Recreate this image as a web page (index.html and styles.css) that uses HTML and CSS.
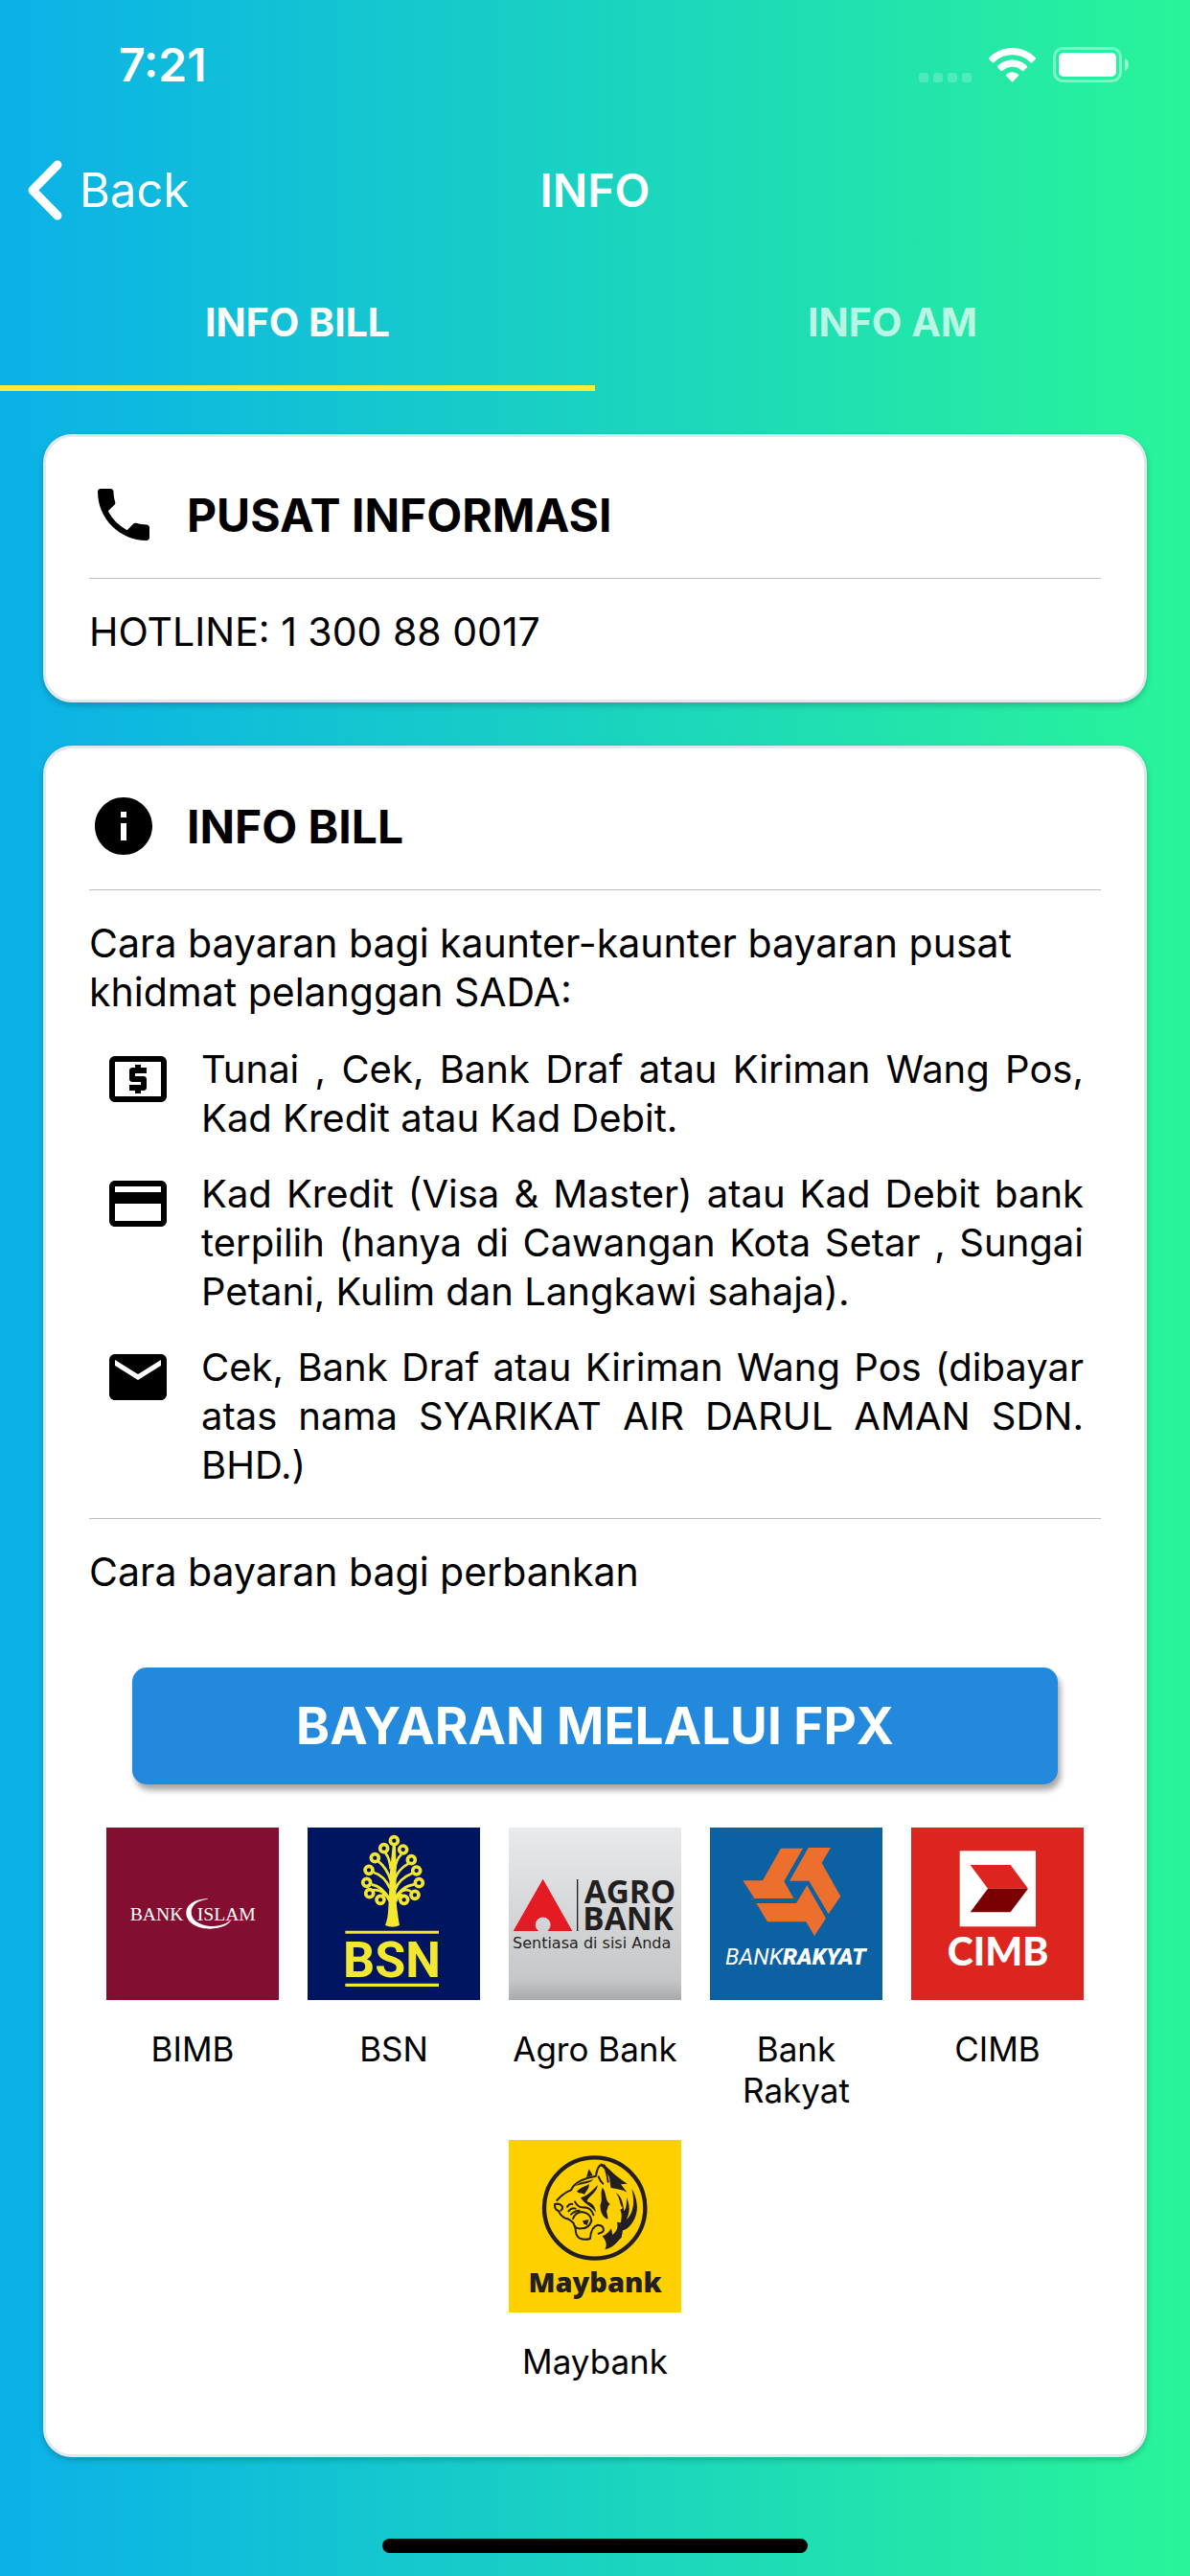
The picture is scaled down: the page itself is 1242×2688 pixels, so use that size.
FILE: index.html
```html
<!DOCTYPE html>
<html lang="ms">
<head>
    <meta charset="UTF-8">
    <meta name="viewport" content="width=device-width, initial-scale=1.0">
    <title>Info</title>
    <link rel="stylesheet" href="styles.css">
</head>
<body>
    <div class="status-bar">
        <span class="time">7:21</span>
        <div class="status-icons">
            <svg class="signal" viewBox="0 0 55 36">
                <g fill="#fff" opacity="0.2">
                    <rect x="0" y="26" width="10" height="10" rx="3"/>
                    <rect x="15" y="26" width="10" height="10" rx="3"/>
                    <rect x="30" y="26" width="10" height="10" rx="3"/>
                    <rect x="45" y="26" width="10" height="10" rx="3"/>
                </g>
            </svg>
            <svg class="wifi" viewBox="0 0 49 36">
                <g fill="#fff">
                    <path d="M24.500 0C15 0 6.500 3.800.5 10.100c-.5.5-.5 1.300 0 1.800l3.200 3.300c.5.5 1.300.5 1.800 0C10.400 10.200 17.100 7.300 24.500 7.300s14.100 2.900 19 7.900c.5.5 1.300.5 1.800 0l3.200-3.300c.5-.5.5-1.300 0-1.800C42.500 3.800 34 0 24.500 0z"/>
                    <path d="M24.500 12.600c-6 0-11.400 2.400-15.200 6.200-.5.5-.5 1.200 0 1.700l3.200 3.300c.5.5 1.300.5 1.800 0 2.600-2.500 6.200-4.100 10.200-4.100s7.600 1.600 10.200 4.100c.5.5 1.300.5 1.800 0l3.200-3.300c.5-.5.5-1.200 0-1.700-3.800-3.800-9.200-6.200-15.200-6.200z"/>
                    <path d="M24.500 25.200c-2.500 0-4.700.9-6.300 2.400-.5.500-.5 1.200 0 1.700l5.400 5.800c.5.500 1.300.5 1.800 0l5.400-5.800c.5-.5.5-1.200 0-1.700-1.600-1.500-3.800-2.400-6.300-2.400z"/>
                </g>
            </svg>
            <svg class="battery" viewBox="0 0 80 38">
                <rect x="1.500" y="1.500" width="69" height="34" rx="9" fill="none" stroke="#fff" stroke-width="3" opacity="0.4"/>
                <rect x="6" y="6" width="60" height="25" rx="5" fill="#fff"/>
                <path d="M75 12c2.500 1 4 3.600 4 6.500s-1.500 5.500-4 6.500z" fill="#fff" opacity="0.5"/>
            </svg>
        </div>
    </div>

    <header class="header">
        <button type="button" class="back">
            <svg viewBox="0 0 36 63"><path d="M31 5L5 31.500L31 58" fill="none" stroke="#fff" stroke-width="9" stroke-linecap="round" stroke-linejoin="round"/></svg>
            Back
        </button>
        <h1>INFO</h1>
    </header>

    <nav class="tabs">
        <button type="button" class="tab active">INFO BILL</button>
        <button type="button" class="tab">INFO AM</button>
    </nav>

    <main class="content">
        <section class="card">
            <div class="card-title">
                <svg class="icon" viewBox="0 0 24 24"><path d="M6.620 10.790c1.440 2.830 3.760 5.140 6.590 6.590l2.200-2.200c.27-.27.67-.36 1.020-.24 1.120.37 2.330.57 3.570.57.55 0 1 .45 1 1V20c0 .55-.45 1-1 1-9.390 0-17-7.610-17-17 0-.55.450-1 1-1h3.500c.55 0 1 .45 1 1 0 1.250.2 2.450.57 3.570.11.35.03.74-.25 1.020l-2.200 2.200z"/></svg>
                <h2>PUSAT INFORMASI</h2>
            </div>
            <hr>
            <p>HOTLINE: 1 300 88 0017</p>
        </section>

        <section class="card">
            <div class="card-title">
                <svg class="icon" viewBox="0 0 24 24"><path d="M12 2C6.480 2 2 6.480 2 12s4.480 10 10 10 10-4.480 10-10S17.520 2 12 2zm1 15h-2v-6h2v6zm0-8h-2V7h2v2z"/></svg>
                <h2>INFO BILL</h2>
            </div>
            <hr>
            <p>Cara bayaran bagi kaunter-kaunter bayaran pusat khidmat pelanggan SADA:</p>
            <ul class="methods">
                <li>
                    <svg class="icon" viewBox="0 0 24 24"><path d="M11 17h2v-1h1c.55 0 1-.45 1-1v-3c0-.55-.45-1-1-1h-3v-1h4V8h-2V7h-2v1h-1c-.55 0-1 .45-1 1v3c0 .55.450 1 1 1h3v1H9v2h2v1zm9-13H4c-1.110 0-1.990.89-1.990 2L2 18c0 1.110.89 2 2 2h16c1.110 0 2-.89 2-2V6c0-1.110-.89-2-2-2zm0 14H4V6h16v12z"/></svg>
                    <p>Tunai , Cek, Bank Draf atau Kiriman Wang Pos, Kad Kredit atau Kad Debit.</p>
                </li>
                <li>
                    <svg class="icon" viewBox="0 0 24 24"><path d="M20 4H4c-1.110 0-1.990.89-1.990 2L2 18c0 1.110.89 2 2 2h16c1.110 0 2-.89 2-2V6c0-1.110-.89-2-2-2zm0 14H4v-6h16v6zm0-10H4V6h16v2z"/></svg>
                    <p>Kad Kredit (Visa &amp; Master) atau Kad Debit bank terpilih (hanya di Cawangan Kota Setar , Sungai Petani, Kulim dan Langkawi sahaja).</p>
                </li>
                <li>
                    <svg class="icon" viewBox="0 0 24 24"><path d="M20 4H4c-1.100 0-1.990.9-1.990 2L2 18c0 1.100.9 2 2 2h16c1.100 0 2-.9 2-2V6c0-1.100-.9-2-2-2zm0 4l-8 5-8-5V6l8 5 8-5v2z"/></svg>
                    <p>Cek, Bank Draf atau Kiriman Wang Pos (dibayar atas nama SYARIKAT AIR DARUL AMAN SDN. BHD.)</p>
                </li>
            </ul>
            <hr>
            <p>Cara bayaran bagi perbankan</p>
            <button type="button" class="fpx">BAYARAN MELALUI FPX</button>

            <div class="banks">
                <a href="#" class="bank">
                    <svg viewBox="0 0 540 540">
                        <rect width="540" height="540" fill="#820e30"/>
                        <g class="islam">
                            <text x="74" y="292">BANK</text>
                            <text x="284" y="292">ISLAM</text>
                        </g>
                        <path fill="#fff" d="M317 222C270 225 248 245 250 270C252 300 290 318 325 317C360 316 385 305 393 286C375 305 345 311 325 309C295 307 266 292 266 265C266 243 285 228 317 224z"/>
                    </svg>
                    <span>BIMB</span>
                </a>
                <a href="#" class="bank">
                    <svg viewBox="0 0 540 540">
                        <rect width="540" height="540" fill="#00155f"/>
                        <g fill="none" stroke="#f4e72f" stroke-width="11">
                            <circle cx="271" cy="41" r="12"/>
                            <circle cx="239" cy="65" r="12"/>
                            <circle cx="299" cy="69" r="12"/>
                            <circle cx="211" cy="95" r="12"/>
                            <circle cx="325" cy="101" r="12"/>
                            <circle cx="192" cy="133" r="12"/>
                            <circle cx="341" cy="135" r="12"/>
                            <circle cx="185" cy="172" r="12"/>
                            <circle cx="349" cy="173" r="12"/>
                            <circle cx="194" cy="206" r="12"/>
                            <circle cx="336" cy="211" r="12"/>
                            <circle cx="228" cy="226" r="12"/>
                            <circle cx="302" cy="226" r="12"/>
                        </g>
                        <g fill="none" stroke="#f4e72f" stroke-width="8">
                            <path d="M244 80Q258 98 260 130M294 84Q276 100 274 130"/>
                            <path d="M222 106Q248 126 260 165M316 113Q284 130 272 165"/>
                            <path d="M206 140Q240 150 258 190M328 143Q286 160 274 195"/>
                            <path d="M200 178Q235 184 257 225M334 178Q292 184 274 225"/>
                            <path d="M204 196Q240 192 258 230M324 200Q298 184 274 222"/>
                            <path d="M234 212Q246 204 258 232M296 212Q286 204 276 232"/>
                        </g>
                        <path fill="#f4e72f" d="M266 56h10L278 150Q276 230 281 260Q284 285 288 306Q266 316 243 306Q252 285 253 250Q256 200 257 150z"/>
                        <path fill="#f4e72f" d="M118 323h293v9H118zM118 488h293v10H118z"/>
                        <text class="bsn" x="264" y="468">BSN</text>
                    </svg>
                    <span>BSN</span>
                </a>
                <a href="#" class="bank">
                    <svg viewBox="0 0 540 540">
                        <defs>
                            <linearGradient id="silver" x1="0" y1="0" x2="0" y2="1">
                                <stop offset="0" stop-color="#e9eaeb"/>
                                <stop offset="0.880" stop-color="#c6c7c9"/>
                                <stop offset="1" stop-color="#a9aaac"/>
                            </linearGradient>
                        </defs>
                        <rect width="540" height="540" fill="url(#silver)"/>
                        <path fill="#e51b23" d="M107 161L199 324H121A24 24 0 1 0 93 324H14z"/>
                        <path stroke="#231f20" stroke-width="4" d="M215 162V324"/>
                        <g class="agro">
                            <text x="236" y="237">AGRO</text>
                            <text x="232" y="322">BANK</text>
                        </g>
                        <text class="agro-tag" x="12" y="379">Sentiasa di sisi Anda</text>
                    </svg>
                    <span>Agro Bank</span>
                </a>
                <a href="#" class="bank">
                    <svg viewBox="0 0 540 540">
                        <rect width="540" height="540" fill="#0b61a1"/>
                        <g fill="#ec6f2d">
                            <path d="M222 65H291L232 168L262 222H139L103 166H165z"/>
                            <path d="M308 63H378L350 111L409 215L371 271L310 167H249z"/>
                            <path d="M304 181L363 284L327 339L301 295H180L145 237H270z"/>
                        </g>
                        <text class="rakyat" x="48" y="429">BANK<tspan font-weight="900">RAKYAT</tspan></text>
                    </svg>
                    <span>Bank Rakyat</span>
                </a>
                <a href="#" class="bank">
                    <svg viewBox="0 0 540 540">
                        <rect width="540" height="540" fill="#dc251f"/>
                        <rect x="152" y="73" width="238" height="237" fill="#fff"/>
                        <path fill="#dc251f" d="M185 117H311L366 191H240z"/>
                        <path fill="#7a0002" d="M240 191H366L311 265H185z"/>
                        <text class="cimb" x="272" y="432">CIMB</text>
                    </svg>
                    <span>CIMB</span>
                </a>
                <a href="#" class="bank">
                    <svg viewBox="0 0 540 540">
                        <rect width="540" height="540" fill="#ffd000"/>
                        <circle cx="269" cy="213" r="158" fill="none" stroke="#231f20" stroke-width="13"/>
                        <!-- tiger head -->
                        <g transform="translate(-93 -69)">
                            <g fill="none" stroke="#231f20" stroke-width="6" stroke-linecap="round" stroke-linejoin="round">
                                <path d="M244 258Q262 236 288 226Q298 200 340 188L366 182Q370 150 384 146"/>
                                <path d="M237 270Q236 288 248 290Q256 308 270 314Q284 316 296 330L302 348Q302 368 314 376Q330 384 348 378Q350 340 372 335Q390 336 390 352Q386 360 374 362"/>
                                <path d="M238 270Q252 266 260 276Q264 284 256 290"/>
                                <path d="M294 316Q300 296 322 294Q350 298 352 322Q344 346 322 346Q302 348 300 338"/>
                                <path d="M392 148Q402 176 404 200M374 184Q378 196 388 206"/>
                                <path d="M300 262Q310 282 330 280Q352 282 358 304"/>
                                <path d="M276 278Q284 266 292 270M280 292Q290 280 302 284M288 302Q300 290 314 290"/>
                            </g>
                            <g fill="#231f20">
                                <path d="M382 142C405 152 420 180 464 206L444 208L464 234C448 222 432 224 412 218L408 186C400 170 394 158 380 150z"/>
                                <path d="M336 186L344 160L356 180z"/>
                                <path d="M306 230C320 214 338 214 344 206C346 222 336 226 330 240C322 232 318 240 306 230z"/>
                                <path d="M300 214C320 196 340 200 358 192C348 206 326 204 300 214zM318 250C340 244 356 226 372 210C368 236 340 246 338 262C350 266 362 270 366 296C352 276 330 270 318 250z"/>
                                <path d="M386 218C400 232 392 254 410 270L404 276C404 284 398 288 400 296L404 316C392 318 376 292 380 270C388 256 378 240 386 218z"/>
                                <path d="M428 234C444 254 438 270 450 282L442 288C450 306 444 318 444 328L432 326C438 350 424 360 418 366L414 346C400 366 394 366 386 370C398 386 402 398 394 412C426 404 436 382 446 374L450 352C470 350 500 310 494 270C492 250 486 234 478 222C490 270 480 300 462 318C478 280 466 262 462 248C462 270 462 280 454 292C450 262 446 246 428 234z"/>
                                <path d="M324 322L344 318L338 336L328 332z"/>
                            </g>
                        </g>
                        <text class="maybank" x="270" y="477">Maybank</text>
                    </svg>
                    <span>Maybank</span>
                </a>
            </div>
        </section>
    </main>

    <footer class="home"><div class="home-bar"></div></footer>
</body>
</html>
```

FILE: styles.css
```css
* {
    box-sizing: border-box;
}

body {
    margin: 0;
    min-height: 100vh;
    display: flex;
    flex-direction: column;
    font-family: Inter, "Liberation Sans", sans-serif;
    font-size: 41px;
    line-height: 51px;
    color: #000;
    background: linear-gradient(to right, #0bb1e8, #29f499);
}

button {
    border: none;
    background: none;
    padding: 0;
    font-family: inherit;
    color: #fff;
    cursor: pointer;
}

h1, h2, p, ul {
    margin: 0;
    padding: 0;
}

/* status bar */
.status-bar {
    height: 132px;
    padding: 3px 63px 0 124px;
    display: flex;
    justify-content: space-between;
    align-items: center;
    color: #fff;
}

.time {
    font-size: 48px;
    font-weight: 600;
}

.status-icons {
    display: flex;
    align-items: center;
    gap: 18px;
}

.signal {
    width: 55px;
    height: 36px;
}

.wifi {
    width: 49px;
    height: 36px;
}

.battery {
    width: 80px;
    height: 38px;
}

/* header */
.header {
    height: 132px;
    padding: 0 29px;
    display: grid;
    grid-template-columns: 1fr auto 1fr;
    align-items: center;
    color: #fff;
}

.back {
    display: flex;
    align-items: center;
    gap: 18px;
    font-size: 49px;
}

.back svg {
    width: 36px;
    height: 63px;
}

h1 {
    font-size: 48px;
    font-weight: 600;
}

/* tabs */
.tabs {
    display: flex;
}

.tab {
    flex: 1;
    height: 144px;
    padding-top: 6px;
    font-size: 41px;
    font-weight: 700;
    border-bottom: 6px solid transparent;
    color: rgba(255, 255, 255, 0.7);
}

.tab.active {
    color: #fff;
    border-bottom-color: #ffeb3b;
}

/* cards */
.content {
    padding: 45px;
    display: flex;
    flex-direction: column;
    gap: 45px;
}

.card {
    background-color: #fff;
    border: 3px solid #e1e8ee;
    border-radius: 30px;
    padding: 45px;
    box-shadow: 0 3px 6px rgba(0, 0, 0, 0.2);
}

.card-title {
    display: flex;
    align-items: center;
    gap: 30px;
}

h2 {
    font-size: 48px;
    font-weight: 700;
}

.icon {
    width: 72px;
    height: 72px;
    flex-shrink: 0;
}

hr {
    border: none;
    height: 1px;
    margin: 30px 0;
    background-color: #bcbec2;
}

.methods {
    list-style: none;
    margin-top: 29px;
    padding: 0 18px 0 15px;
    display: flex;
    flex-direction: column;
    gap: 28px;
}

.methods li {
    display: flex;
    align-items: flex-start;
    gap: 30px;
}

.methods p {
    flex: 1;
    font-size: 40px;
    text-align: justify;
}

.fpx {
    display: block;
    width: calc(100% - 90px);
    height: 122px;
    margin: 74px auto 45px;
    border-radius: 15px;
    background-color: #2289dc;
    font-size: 53px;
    font-weight: 700;
    box-shadow: 3px 6px 6px rgba(0, 0, 0, 0.35);
}

/* banks */
.banks {
    display: flex;
    flex-wrap: wrap;
    justify-content: center;
    gap: 30px;
    margin-bottom: 30px;
}

.bank {
    width: 180px;
    display: flex;
    flex-direction: column;
    gap: 30px;
    font-size: 35px;
    line-height: 43px;
    text-align: center;
    text-decoration: none;
    color: #000;
}

.bank svg {
    width: 180px;
    height: 180px;
}

.islam {
    font-family: "Liberation Serif", serif;
    font-size: 59px;
    fill: #fff;
}

.bsn {
    font-family: Roboto, sans-serif;
    font-size: 156px;
    font-weight: 700;
    text-anchor: middle;
    fill: #f4e72f;
}

.agro {
    font-family: "Open Sans", sans-serif;
    font-size: 100px;
    font-weight: 700;
    fill: #231f20;
}

.agro-tag {
    font-family: "DejaVu Sans", sans-serif;
    font-size: 48px;
    fill: #231f20;
}

.rakyat {
    font-family: Roboto, sans-serif;
    font-size: 71px;
    font-style: italic;
    fill: #fff;
}

.cimb {
    font-family: Lato, sans-serif;
    font-size: 123px;
    font-weight: 900;
    text-anchor: middle;
    fill: #fff;
}

.maybank {
    font-family: "Open Sans", sans-serif;
    font-size: 87px;
    font-weight: 800;
    text-anchor: middle;
    fill: #231f20;
}

/* home indicator */
.home {
    margin-top: auto;
    padding-bottom: 24px;
}

.home-bar {
    width: 444px;
    height: 15px;
    margin: 0 auto;
    border-radius: 8px;
    background-color: #000;
}
```
